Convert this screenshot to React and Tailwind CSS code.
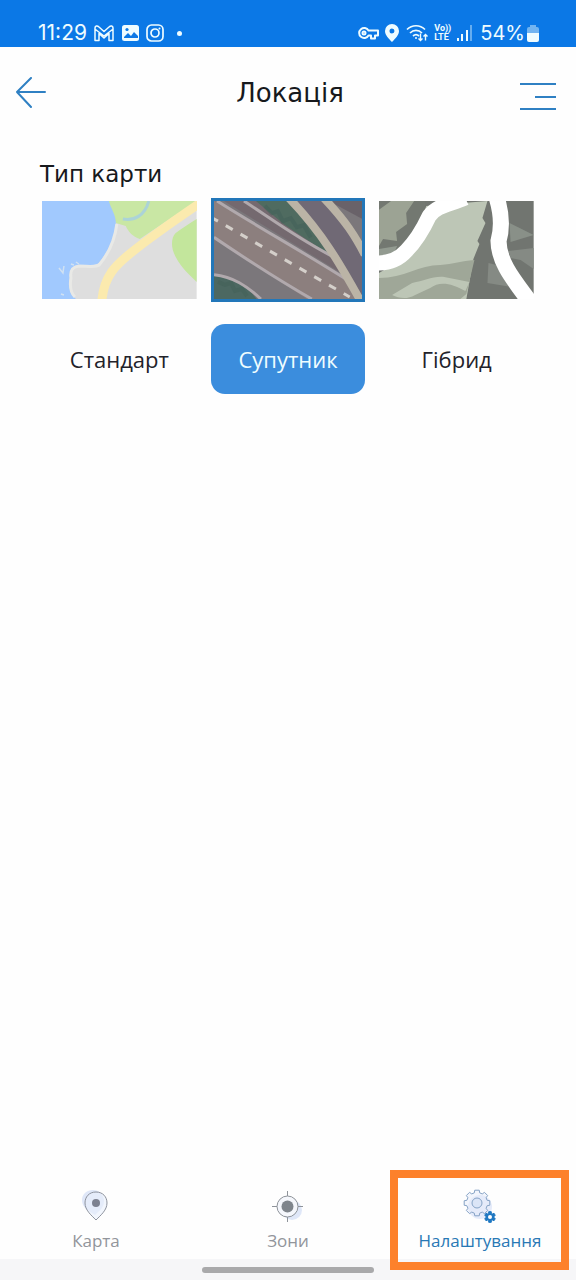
import React from 'react';
import clsx from 'clsx';

const BLUE = '#2f80c3';

// Builds a closed outline of a cog with the given number of teeth
function gearPath(cx, cy, outer, inner, teeth) {
  const step = (Math.PI * 2) / teeth;
  const points = [];
  for (let i = 0; i < teeth; i++) {
    const a = i * step - Math.PI / 2;
    [
      [-0.33, inner],
      [-0.22, outer],
      [0.22, outer],
      [0.33, inner],
    ].forEach(([k, r]) => {
      points.push(
        `${(cx + Math.cos(a + k * step) * r).toFixed(2)} ${(cy + Math.sin(a + k * step) * r).toFixed(2)}`
      );
    });
  }
  return `M${points.join('L')}Z`;
}

function StandardMap() {
  return (
    <svg viewBox="0 0 155 98" preserveAspectRatio="none" className="block h-full w-full" aria-hidden="true">
      <rect width="155" height="98" fill="#dedede" />
      <path d="M66 0h89L98 38C91 36 86 30 84 25L74 22Z" fill="#c9e7a4" />
      <path d="M155 18c-7 4-14 9-21 14-5 5-5 15 0 24 6 11 13 17 21 25Z" fill="#c3e69c" />
      <path d="M81 18c11 2 22-3 26-18" fill="none" stroke="#abd3d7" strokeWidth="3" />
      <path
        d="M0 0h67c2 8 7 13 7 22-1 17-8 29-18 41-4 4-12 1-20 1-6 1-9 6-8 12-1 7-1 16 6 22H0Z"
        fill="#a1c9fe"
      />
      <path d="M75 23c-2 16-8 29-17 40-3 4-12 2-21 2-7 1-9 5-8 12-1 6-1 14 4 19" fill="none" stroke="#e9e9e6" strokeWidth="3" />
      <path d="M17 67l4 5 1-7M29 63l3 1M34 61l3 2M19 93l3 1" fill="none" stroke="#d0e1f2" strokeWidth="1.5" />
      <path d="M160 1C132 20 109 36 89 52 74 64 62 75 60 100" fill="none" stroke="#fbeaae" strokeWidth="9" />
    </svg>
  );
}

function SatelliteMap() {
  return (
    <svg viewBox="0 0 149 97" preserveAspectRatio="none" className="block h-full w-full" aria-hidden="true">
      <rect width="149" height="97" fill="#7b777b" />
      <path d="M0 0L135 78 149 97H93L0 36Z" fill="#8c7f7e" />
      <path d="M10 0h35l78 59 9 15Z" fill="#74696f" />
      <path d="M42 0h34c12 12 26 29 44 56L70 23Z" fill="#4f6b60" />
      <path d="M76 0h39c18 18 29 35 34 50v47C130 55 106 27 76 0Z" fill="#706975" />
      <path d="M115 0h34v18Z" fill="#696269" />
      <path d="M0 72c19 2 33 13 43 25H0Z" fill="#4c6861" />
      <path d="M51 5l7 7 6-2 5 10 8-3 6 9 7-2 7 12M4 80l7 3 6-2 4 8 7-2 5 7" fill="none" stroke="#425f57" strokeWidth="4" opacity=".5" />
      <path d="M3 0c45 28 84 49 132 79M30 0c31 20 55 38 91 56M0 36c33 22 66 43 98 61M0 73c19 2 33 11 47 24" fill="none" stroke="#b1a9ad" strokeWidth="3" />
      <path d="M75 -3c34 35 51 65 72 102M110 -3c22 23 31 37 41 56" fill="none" stroke="#bbb4a6" strokeWidth="8" />
      <path d="M-3 16L136 95" fill="none" stroke="#d4cfca" strokeWidth="3" strokeDasharray="8 9" />
    </svg>
  );
}

function HybridMap() {
  return (
    <svg viewBox="0 0 154 98" preserveAspectRatio="none" className="block h-full w-full" aria-hidden="true">
      <rect width="154" height="98" fill="#717570" />
      <path d="M0 0h46v62H0Z" fill="#737871" />
      <path d="M12 0h23l-8 12 1 11-11 8 1 9-14-2-4 7-10 3V16Z" fill="#9ca394" />
      <path d="M0 48l18-3-5 12-13 4Z" fill="#929a90" />
      <path d="M47 5L108 0l-5 17 3 5-8 18 2 3-6 15-7 40H0V72C27 58 39 31 47 5Z" fill="#bdc6b6" />
      <path d="M0 77c25 0 40-13 61-13 13-1 21-4 34-5l-8 34-6 5H0Z" fill="#9fa798" />
      <path d="M13 94l20-12c12-2 20-7 32-6l25 5-4 9c-14-8-26-10-35-3l-15 7c-9 5-16 3-23 0Z" fill="#bdc6b6" />
      <path d="M130 22l24 12-23 7Z" fill="#899088" />
      <path d="M129 50l25-3v21l-13-9-10-2ZM109 62l8 2 15 22-24-4Z" fill="#858a84" />
      <path d="M86 -3C70 4 58 4 50 15 43 30 35 42 27 50 20 58 11 62 -2 62" fill="none" stroke="#fff" strokeWidth="15" />
      <path d="M117 -4c5 16 6 30 2 44 0 22 17 41 32 62" fill="none" stroke="#fff" strokeWidth="16" />
    </svg>
  );
}

const MAP_TYPES = [
  { id: 'standard', label: 'Стандарт', Preview: StandardMap },
  { id: 'satellite', label: 'Супутник', Preview: SatelliteMap },
  { id: 'hybrid', label: 'Гібрид', Preview: HybridMap },
];

function StatusBar() {
  return (
    <div className="flex h-[47px] items-end justify-between bg-[#0b78e6] pb-[2px] pl-[38px] pr-[37px] font-['Inter',sans-serif] leading-6 text-[#effcff]">
      <div className="flex items-center gap-[7px]">
        <span className="text-[21px]">11:29</span>
        <svg width="20" height="17" viewBox="0 0 20 17" fill="none" stroke="currentColor" strokeWidth="1.5" strokeLinejoin="round" aria-hidden="true">
          <path d="M1 15.500V3c0-2 2-3 4-1l5 4.500L15 2c2-2 4-1 4 1v12.500h-4V8.500l-5 4.500-5-4.500v7ZM1.500 4.500L10 11l8.500-6.500" />
        </svg>
        <svg width="18" height="18" viewBox="0 0 18 18" aria-hidden="true">
          <rect x="1" y="1" width="17" height="16" rx="2.5" fill="currentColor" />
          <path d="M3 13l4-4 3 3 3-4 4 4v2H3Z" fill="#0b78e6" />
          <circle cx="6" cy="5.5" r="1.6" fill="#0b78e6" />
        </svg>
        <svg width="18" height="18" viewBox="0 0 18 18" fill="none" stroke="currentColor" strokeWidth="1.7" aria-hidden="true">
          <rect x="1" y="1" width="16" height="16" rx="4.5" />
          <circle cx="9" cy="9" r="4" />
          <circle cx="13.5" cy="4.5" r="1" fill="currentColor" stroke="none" />
        </svg>
        <span className="ml-[6px] h-[5px] w-[5px] rounded-full bg-current" />
      </div>
      <div className="flex items-center gap-[6px]">
        <svg width="21" height="14" viewBox="0 0 21 14" fill="none" stroke="currentColor" strokeWidth="2" strokeLinejoin="round" aria-hidden="true">
          <path d="M10.500 4.500A5 5 0 1 0 10.500 9.500H13v3h4v-3h3v-5Z" />
          <circle cx="6" cy="7" r="1.500" />
        </svg>
        <svg width="15" height="18" viewBox="0 0 15 18" fill="currentColor" aria-hidden="true">
          <path fillRule="evenodd" d="M7 0a7 7 0 0 1 7 7c0 4-3.500 7.500-7 11C3.500 14.500 0 11 0 7a7 7 0 0 1 7-7Zm0 4.500a2.500 2.500 0 1 0 0 5 2.500 2.500 0 0 0 0-5Z" />
        </svg>
        <svg width="22" height="18" viewBox="0 0 22 18" fill="none" stroke="currentColor" strokeWidth="1.7" aria-hidden="true">
          <path d="M1 5.500c5-5 13-5 18 0M4 9c3.500-3.500 8.500-3.500 12 0M7 12c2-1.800 4-1.800 6 0" />
          <path d="M14.500 9.500v7m-2-2 2 2 2-2M19.500 16.500v-6m-2 2 2-2 2 2" strokeWidth="1.400" />
          <circle cx="10" cy="14" r="1" fill="currentColor" stroke="none" />
        </svg>
        <span className="flex flex-col font-['Roboto',sans-serif] text-[9px] font-bold leading-[9px]">
          <span>Vo))</span>
          <span>LTE</span>
        </span>
        <svg width="17" height="16" viewBox="0 0 17 16" fill="currentColor" aria-hidden="true">
          <path d="M0 13h2v3H0zM4 9h2v7H4zM9 5h2v11H9z" />
          <path d="M13 0h2v16h-2z" opacity=".4" />
        </svg>
        <span className="text-[20px]">54%</span>
        <svg width="12" height="17" viewBox="0 0 12 17" fill="currentColor" className="-ml-1" aria-hidden="true">
          <path d="M3 0h6v2h1a2 2 0 0 1 2 2v4H0V4a2 2 0 0 1 2-2h1Z" opacity=".45" />
          <path d="M0 8h12v7a2 2 0 0 1-2 2H2a2 2 0 0 1-2-2Z" />
        </svg>
      </div>
    </div>
  );
}

function Header() {
  return (
    <header className="flex h-[91px] items-center justify-between pl-4 pr-5">
      <button type="button" aria-label="Назад" className="w-9">
        <svg width="32" height="32" viewBox="0 0 32 32" fill="none" stroke={BLUE} strokeWidth="2" strokeLinecap="round" strokeLinejoin="round">
          <path d="M15 1L1 15l14 15M1 15h28" />
        </svg>
      </button>
      <h1 className="pl-2 font-['DejaVu_Sans',sans-serif] text-[26px] leading-8 text-[#17191c]">Локація</h1>
      <button type="button" aria-label="Меню" className="w-9 pt-2">
        <svg width="36" height="28" viewBox="0 0 36 28" fill="none" stroke={BLUE} strokeWidth="2">
          <path d="M0 1h36M15 14h21M0 26h36" />
        </svg>
      </button>
    </header>
  );
}

function MapTypeOption({ label, Preview, selected }) {
  return (
    <button type="button" aria-pressed={selected} className="flex flex-1 flex-col items-stretch gap-[22px]">
      <span className={clsx('block h-[104px]', selected ? 'border-[3px] border-[#2277b9]' : 'py-[3px]')}>
        <Preview />
      </span>
      <span
        className={clsx(
          'flex h-[70px] items-center justify-center rounded-[14px] text-[22px] leading-8',
          selected ? 'bg-[#3b8ddd] text-[#effdff]' : 'text-[#22222a]'
        )}
      >
        {label}
      </span>
    </button>
  );
}

function PinIcon() {
  return (
    <svg width="34" height="34" viewBox="0 0 34 34" fill="none" aria-hidden="true">
      <path d="M14 1a11 11 0 0 1 11 11c0 7-5 10-9 14C8 21 3 18 3 11 3 5 8 1 14 1Z" fill="#dfe7f8" />
      <path d="M17 3c7 0 11 5 11 11 0 7-6 12-11 17C12 26 6 21 6 14 6 8 10 3 17 3Z" fill="#eaf0fb" fillOpacity=".6" stroke="#8e939e" />
      <circle cx="17" cy="14" r="4" fill="#7c8190" />
    </svg>
  );
}

function TargetIcon() {
  return (
    <svg width="34" height="34" viewBox="0 0 34 34" fill="none" aria-hidden="true">
      <circle cx="21" cy="21" r="10" fill="#dfe7f8" />
      <circle cx="16.500" cy="17.500" r="10.500" fill="#f5f7fc" stroke="#8e939a" />
      <path d="M16.500 2v5M16.500 28v5M1 17.500h5M27 17.500h5" stroke="#8e939a" />
      <circle cx="16.500" cy="17.500" r="6" fill="#7f858c" />
    </svg>
  );
}

function SettingsIcon() {
  return (
    <svg width="34" height="34" viewBox="0 0 34 34" fill="none" aria-hidden="true">
      <circle cx="17" cy="18" r="12" fill="#e5ebfa" />
      <path d={gearPath(14, 14, 13, 10.5, 8)} fill="#e5ebfa" fillOpacity=".5" stroke="#86a3c6" strokeLinejoin="round" />
      <circle cx="14" cy="14" r="5" fill="#dbe5f7" stroke="#86a3c6" />
      <path d={gearPath(27, 28, 5.5, 4, 6)} fill="#1f78c2" stroke="#1f78c2" strokeLinejoin="round" />
      <circle cx="27" cy="28" r="2" fill="#fff" />
    </svg>
  );
}

const TABS = [
  { id: 'map', label: 'Карта', Icon: PinIcon },
  { id: 'zones', label: 'Зони', Icon: TargetIcon },
  { id: 'settings', label: 'Налаштування', Icon: SettingsIcon, active: true },
];

function TabBar() {
  return (
    <nav className="grid grid-cols-3">
      {TABS.map(({ id, label, Icon, active }) => (
        <a
          key={id}
          href={`#${id}`}
          aria-current={active ? 'page' : undefined}
          className={clsx(
            'relative flex flex-col items-center pb-[6px] text-[17px] leading-6',
            active ? 'text-[#2878b5]' : 'text-[#92959b]'
          )}
        >
          <Icon />
          <span className="mt-[6px]">{label}</span>
          {active && (
            <span className="absolute -bottom-[11px] -top-[19px] left-[6px] right-[7px] border-8 border-[#fd812b]" />
          )}
        </a>
      ))}
    </nav>
  );
}

export default function App() {
  return (
    <div className="flex min-h-screen flex-col bg-[#fefefe] font-['Open_Sans','Noto_Sans',sans-serif]">
      <StatusBar />
      <Header />
      <main className="flex-1 px-[42px] pt-5">
        <h2 className="-ml-[2px] font-['DejaVu_Sans',sans-serif] text-[23px] leading-8 text-[#17191c]">Тип карти</h2>
        <div className="mt-2 flex gap-[14px]">
          {MAP_TYPES.map(({ id, label, Preview }) => (
            <MapTypeOption key={id} label={label} Preview={Preview} selected={id === 'satellite'} />
          ))}
        </div>
      </main>
      <TabBar />
      <div className="flex h-[21px] items-center justify-center bg-[#f6f6f8]">
        <span className="h-[6px] w-[30%] rounded-full bg-[#a9a9ab]" />
      </div>
    </div>
  );
}
